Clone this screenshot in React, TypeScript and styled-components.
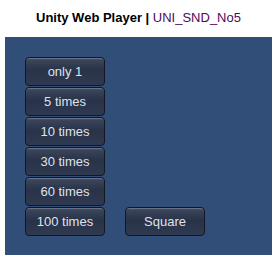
import React from 'react';
import styled, { createGlobalStyle } from 'styled-components';

const GlobalStyle = createGlobalStyle`
    html, body {
        margin: 0;
        padding: 0;
        background: #fff;
        font-family: 'Liberation Sans', Arial, sans-serif;
    }
`;

const Header = styled.div`
    height: 37px;
    display: flex;
    align-items: center;
    justify-content: center;
    font-size: 13px;
    color: #000;
    padding-bottom: 2px;
    box-sizing: border-box;

    b {
        font-weight: bold;
    }
    span {
        color: #52075a;
    }
`;

const Panel = styled.div`
    margin: 0 5px;
    height: 218px;
    background: #314e79;
    padding: 20px 0 0 20px;
    box-sizing: border-box;
    display: flex;
    flex-direction: column;
    gap: 1px;
`;

const Row = styled.div`
    display: flex;
    gap: 20px;
`;

const Button = styled.button`
    width: 80px;
    height: 29px;
    padding: 0;
    border: 1px solid #121722;
    border-radius: 4px;
    background: linear-gradient(to bottom, #5a667c 0px, #3a455a 2px, #283248 45%, #2f3a50 100%);
    box-shadow: inset 0 1px 0 rgba(255, 255, 255, 0.12);
    color: #dfe3ea;
    font-family: 'Liberation Sans', Arial, sans-serif;
    font-size: 13px;
    display: flex;
    align-items: center;
    justify-content: center;
    cursor: pointer;
`;

const App = () => {
    const counts = ['only 1', '5 times', '10 times', '30 times', '60 times'];
    return (
        <>
            <GlobalStyle />
            <Header>
                <b>Unity Web Player |&nbsp;</b>
                <span>UNI_SND_No5</span>
            </Header>
            <Panel>
                {counts.map((text, index) => (
                    <Row key={`count-${index}`}>
                        <Button>{text}</Button>
                    </Row>
                ))}
                <Row>
                    <Button>100 times</Button>
                    <Button>Square</Button>
                </Row>
            </Panel>
        </>
    );
};

export default App;
